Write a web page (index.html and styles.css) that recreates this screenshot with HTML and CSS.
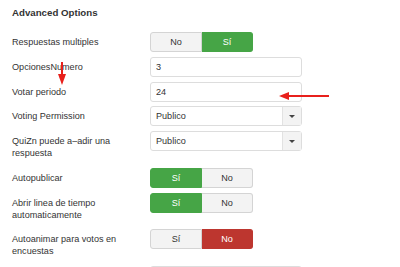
FILE: index.html
```html
<!DOCTYPE html>
<html lang="es">
<head>
    <meta charset="UTF-8">
    <meta name="viewport" content="width=device-width, initial-scale=1.0">
    <title>Advanced Options</title>
    <link rel="stylesheet" href="styles.css">
</head>
<body>
    <div class="panel">
        <h3 class="panel-title">Advanced Options</h3>

        <div class="row">
            <label class="row-label">Respuestas multiples</label>
            <div class="toggle">
                <span class="toggle-btn">No</span>
                <span class="toggle-btn green">Sí</span>
            </div>
        </div>

        <div class="row">
            <label class="row-label">OpcionesNumero</label>
            <input class="text-input" type="text" value="3">
        </div>

        <div class="row">
            <label class="row-label">Votar periodo</label>
            <input class="text-input" type="text" value="24">
        </div>

        <div class="row">
            <label class="row-label">Voting Permission</label>
            <div class="select">
                <span class="select-value">Publico</span>
                <span class="select-caret"></span>
            </div>
        </div>

        <div class="row">
            <label class="row-label">QuiZn puede a–adir una respuesta</label>
            <div class="select">
                <span class="select-value">Publico</span>
                <span class="select-caret"></span>
            </div>
        </div>

        <div class="row">
            <label class="row-label">Autopublicar</label>
            <div class="toggle">
                <span class="toggle-btn green">Sí</span>
                <span class="toggle-btn">No</span>
            </div>
        </div>

        <div class="row">
            <label class="row-label">Abrir linea de tiempo automaticamente</label>
            <div class="toggle">
                <span class="toggle-btn green">Sí</span>
                <span class="toggle-btn">No</span>
            </div>
        </div>

        <div class="row">
            <label class="row-label">Autoanimar para votos en encuestas</label>
            <div class="toggle">
                <span class="toggle-btn">Sí</span>
                <span class="toggle-btn red">No</span>
            </div>
        </div>

        <div class="row">
            <label class="row-label"></label>
            <input class="text-input" type="text" value="">
        </div>

        <!-- flechas rojas de la captura -->
        <div class="arrow arrow-down"></div>
        <div class="arrow arrow-left"></div>
    </div>
</body>
</html>
```

FILE: styles.css
```css
body {
    margin: 0;
    background: #fff;
    font-family: "Liberation Sans", Arial, sans-serif;
    color: #333;
    font-size: 9.1px;
}

.panel {
    position: relative;
    padding: 7px 12px 0 12px;
}

.panel-title {
    margin: 0 0 13px 0;
    font-size: 9.7px;
    font-weight: bold;
    line-height: 12px;
}

/* cada fila: etiqueta + control */
.row {
    display: grid;
    grid-template-columns: 138px 152px;
    margin-bottom: 4.75px;
}

.row-label {
    padding: 4px 20px 4px 0;
    line-height: 12px;
}

/* grupo de botones Sí / No */
.toggle {
    display: flex;
    width: 103px;
    height: 20px;
    align-self: start;
}

.toggle-btn {
    flex: 1;
    display: flex;
    align-items: center;
    justify-content: center;
    background: #f3f3f3;
    border: 1px solid #d4d4d4;
    color: #333;
}

.toggle-btn:first-child {
    border-radius: 3px 0 0 3px;
}

.toggle-btn:last-child {
    border-radius: 0 3px 3px 0;
    border-left: 0;
}

.toggle-btn.green {
    background: #46a546;
    border-color: #46a546;
    color: #fff;
}

.toggle-btn.red {
    background: #bd362f;
    border-color: #bd362f;
    color: #fff;
}

.text-input {
    box-sizing: border-box;
    width: 152px;
    height: 20px;
    margin: 0;
    padding: 0 5px;
    border: 1px solid #ddd;
    border-radius: 3px;
    font: inherit;
    color: #333;
    align-self: start;
}

.select {
    box-sizing: border-box;
    display: flex;
    width: 152px;
    height: 20px;
    border: 1px solid #ddd;
    border-radius: 3px;
    align-self: start;
}

.select-value {
    flex: 1;
    display: flex;
    align-items: center;
    padding-left: 5px;
}

.select-caret {
    width: 18px;
    background: #f3f3f3;
    border-left: 1px solid #e2e2e2;
    display: flex;
    align-items: center;
    justify-content: center;
}

.select-caret::after {
    content: "";
    border-left: 3px solid transparent;
    border-right: 3px solid transparent;
    border-top: 3px solid #444;
}

/* flechas */
.arrow {
    position: absolute;
    background: #e8201c;
}

.arrow-down {
    left: 61px;
    top: 62px;
    width: 2px;
    height: 14px;
}

.arrow-down::after {
    content: "";
    position: absolute;
    left: -3px;
    top: 12px;
    border-left: 4px solid transparent;
    border-right: 4px solid transparent;
    border-top: 11px solid #e8201c;
}

.arrow-left {
    left: 288px;
    top: 95px;
    width: 41px;
    height: 2px;
}

.arrow-left::after {
    content: "";
    position: absolute;
    left: -9px;
    top: -3px;
    border-top: 4px solid transparent;
    border-bottom: 4px solid transparent;
    border-right: 10px solid #e8201c;
}
```
